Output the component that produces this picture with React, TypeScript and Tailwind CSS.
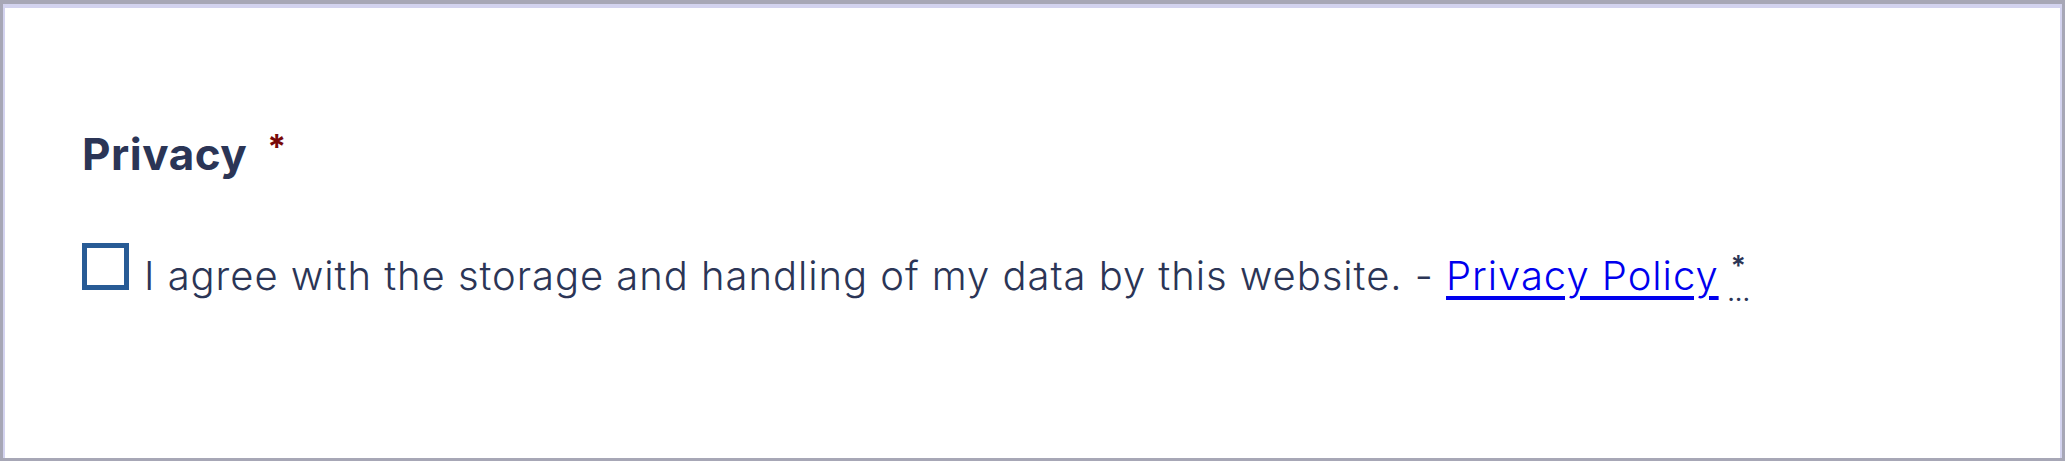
import React from "react";

const App = () => {
  return (
    <div className="w-[2065px] h-[461px] bg-[#a7a7b6] pt-[4px] pl-[3px] pr-[3px] pb-[3px]">
      <div className="h-full bg-white border-t-[4px] border-l-[2px] border-r-[2px] border-[#d3d3ef]">
        <div className="pl-[77px] pt-[124px] text-[#2b3556]" style={{ fontFamily: "Inter, 'Liberation Sans', sans-serif" }}>
          {/* Heading */}
          <div className="flex items-start h-[60px]">
            <span className="text-[44px] font-bold leading-none tracking-[0.5px]">Privacy</span>
            <span className="ml-[20px] -mt-[2px] text-[34px] font-bold leading-none text-[#780808]">*</span>
          </div>

          {/* Consent row */}
          <div className="mt-[51px] flex items-start">
            <span className="block w-[47px] h-[47px] border-[5px] border-[#285b95] bg-white shrink-0" />
            <p className="ml-[15px] mt-[13px] text-[40px] font-light leading-none tracking-[0.95px] whitespace-nowrap">
              I agree with the storage and handling of my data by this website. -{" "}
              <a href="#" className="text-[#0000ee] underline decoration-[4px] underline-offset-[6px]">
                Privacy Policy
              </a>
              <span className="relative inline-block w-[34px] h-[40px] align-top">
                <span className="absolute left-[12px] -top-[4px] text-[28px] font-semibold leading-none">*</span>
                <span className="absolute left-[9px] top-[28px] text-[20px] font-bold leading-none tracking-[1px]">...</span>
              </span>
            </p>
          </div>
        </div>
      </div>
    </div>
  );
};

export default App;
